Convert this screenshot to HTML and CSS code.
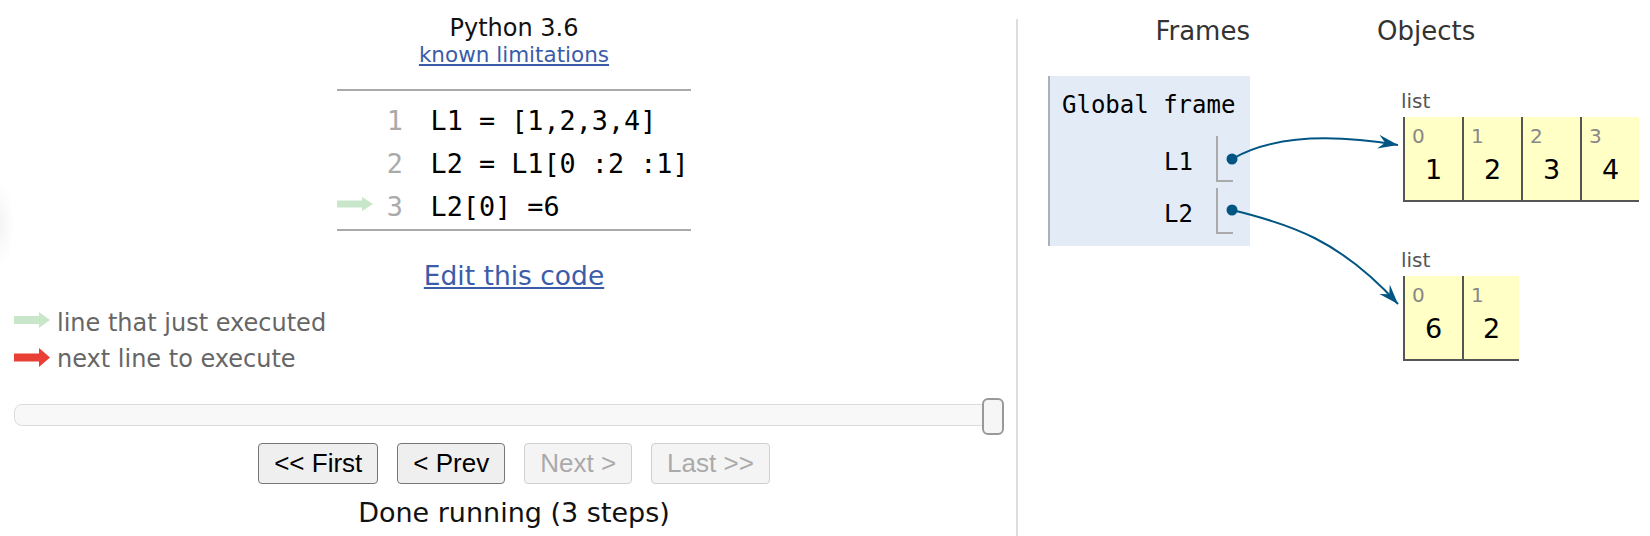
FILE: index.html
```html
<!DOCTYPE html>
<html lang="en">
<head>
<meta charset="utf-8">
<title>Python Tutor</title>
<link rel="stylesheet" href="styles.css">
</head>
<body>
<div class="edge-shadow"></div>
<div class="page">
  <section class="left">
    <div class="lang">Python 3.6</div>
    <a class="limits" href="#">known limitations</a>
    <div class="code">
      <div class="line"><span class="mark"></span><span class="num">1</span><span class="src">L1 = [1,2,3,4]</span></div>
      <div class="line"><span class="mark"></span><span class="num">2</span><span class="src">L2 = L1[0 :2 :1]</span></div>
      <div class="line"><span class="mark"><svg class="code-arrow" viewBox="0 0 36 14" width="36" height="14"><path d="M0,3.5 H25 V0 L36,7 L25,14 V10.5 H0 Z" fill="#c8e6c9"/></svg></span><span class="num">3</span><span class="src">L2[0] =6</span></div>
    </div>
    <a class="edit" href="#">Edit this code</a>
    <div class="legend">
      <div class="legend-row"><svg class="leg-arrow green" viewBox="0 0 36 16" width="36" height="16"><path d="M0,4 H25 V0 L36,8 L25,16 V12 H0 Z" fill="#c8e6c9"/></svg><span>line that just executed</span></div>
      <div class="legend-row"><svg class="leg-arrow red" viewBox="0 0 36 19" width="36" height="19"><path d="M0,5.5 H25 V0 L36,9.5 L25,19 V13.5 H0 Z" fill="#e93f34"/></svg><span>next line to execute</span></div>
    </div>
    <div class="slider"><div class="track"></div><div class="handle"></div></div>
    <div class="buttons">
      <button class="btn">&lt;&lt; First</button>
      <button class="btn">&lt; Prev</button>
      <button class="btn" disabled>Next &gt;</button>
      <button class="btn" disabled>Last &gt;&gt;</button>
    </div>
    <div class="status">Done running (3 steps)</div>
  </section>
  <div class="divider"></div>
  <section class="right">
    <div class="frames-col">
      <div class="col-head frames-head">Frames</div>
      <div class="frame">
        <div class="frame-title">Global frame</div>
        <div class="var-row"><span class="var-name">L1</span><span class="var-val"></span></div>
        <div class="var-row"><span class="var-name">L2</span><span class="var-val"></span></div>
      </div>
    </div>
    <div class="objects-col">
      <div class="col-head">Objects</div>
      <div class="heap">
        <div class="heap-obj">
          <div class="type">list</div>
          <div class="list">
            <div class="cell"><div class="idx">0</div><div class="val">1</div></div>
            <div class="cell"><div class="idx">1</div><div class="val">2</div></div>
            <div class="cell"><div class="idx">2</div><div class="val">3</div></div>
            <div class="cell"><div class="idx">3</div><div class="val">4</div></div>
          </div>
        </div>
        <div class="heap-obj second">
          <div class="type">list</div>
          <div class="list">
            <div class="cell"><div class="idx">0</div><div class="val">6</div></div>
            <div class="cell narrow"><div class="idx">1</div><div class="val">2</div></div>
          </div>
        </div>
      </div>
    </div>
    <svg class="pointers" width="632" height="536" viewBox="0 0 632 536">
      <defs>
        <marker id="head" markerUnits="userSpaceOnUse" viewBox="0 0 20 16" markerWidth="20" markerHeight="16" refX="20" refY="8" orient="auto">
          <path d="M0,1 L20,8 L0,15 L7,8 Z" fill="#005583"/>
        </marker>
      </defs>
      <path d="M214,159 C250,138 302,132 380,145" fill="none" stroke="#005583" stroke-width="2" marker-end="url(#head)"/>
      <path d="M214,210 C272,224 322,240 380,304" fill="none" stroke="#005583" stroke-width="2" marker-end="url(#head)"/>
      <circle cx="214" cy="159" r="5.5" fill="#005583"/>
      <circle cx="214" cy="210" r="5.5" fill="#005583"/>
    </svg>
  </section>
</div>
</body>
</html>
```
FILE: styles.css
```css
html, body {
  margin: 0;
  padding: 0;
  background: #fff;
}
body {
  font-family: "DejaVu Sans", Verdana, sans-serif;
  color: #000;
  overflow: hidden;
}
.edge-shadow {
  position: absolute;
  left: 0;
  top: 180px;
  width: 14px;
  height: 88px;
  background: radial-gradient(ellipse 14px 44px at 0 50%, rgba(0,0,0,0.045), rgba(0,0,0,0) 100%);
}
.page {
  display: flex;
  height: 536px;
}

/* ---------- left panel ---------- */
.left {
  width: 1000px;
  margin-left: 14px;
  margin-right: 2px;
  padding-top: 14px;
  display: flex;
  flex-direction: column;
  align-items: center;
}
.lang {
  font-size: 24px;
  line-height: 28px;
  color: #111;
}
.limits {
  display: block;
  font-size: 21.5px;
  line-height: 26px;
  color: #3b5ca9;
  text-decoration: underline;
}
.code {
  margin-top: 21px;
  width: 354px;
  border-top: 2px solid #aaa;
  border-bottom: 2px solid #aaa;
  padding-top: 11px;
  padding-bottom: 3px;
  display: flex;
  flex-direction: column;
  gap: 5px;
  font-family: "DejaVu Sans Mono", monospace;
  font-size: 26.8px;
}
.line {
  display: flex;
  height: 38px;
  line-height: 38px;
  white-space: pre;
}
.mark {
  width: 36px;
  flex: none;
}
.code-arrow {
  display: block;
  margin-top: 9px;
}
.num {
  width: 30px;
  flex: none;
  text-align: right;
  color: #aaa;
}
.src {
  margin-left: 27.5px;
}
.edit {
  display: block;
  margin-top: 29px;
  font-size: 26.5px;
  line-height: 32px;
  color: #3b5ca9;
  text-decoration: underline;
}
.legend {
  align-self: stretch;
  margin-top: 12.7px;
  font-size: 24px;
  color: #666;
}
.legend-row {
  display: flex;
  align-items: flex-start;
  height: 36px;
  line-height: 36px;
}
.leg-arrow {
  display: block;
  flex: none;
  margin-top: 7px;
  margin-right: 7px;
}
.slider {
  align-self: stretch;
  position: relative;
  margin-top: 27.3px;
  width: 990px;
  height: 22px;
}
.track {
  height: 22px;
  box-sizing: border-box;
  margin-right: 12px;
  border: 1px solid #dcdcdc;
  border-radius: 8px;
  background: #f8f8f8;
}
.handle {
  position: absolute;
  right: 0;
  top: -6px;
  width: 22px;
  height: 37px;
  box-sizing: border-box;
  border: 2px solid #999;
  border-radius: 6px;
  background: #f6f6f6;
}
.buttons {
  margin-top: 17px;
  display: flex;
  gap: 19px;
}
.btn {
  font-family: "Liberation Sans", Arial, sans-serif;
  font-size: 26px;
  line-height: 29px;
  padding: 5px 15px;
  margin: 0;
  border: 1px solid #767676;
  border-radius: 4px;
  background: #efefef;
  color: #000;
}
.btn:disabled {
  border-color: #cfcfcf;
  background: #f4f4f4;
  color: #aaa;
}
.status {
  margin-top: 13px;
  font-size: 27px;
  line-height: 31px;
  color: #111;
}

/* ---------- divider ---------- */
.divider {
  width: 2px;
  flex: none;
  margin-top: 19px;
  background: #ddd;
}

/* ---------- right panel ---------- */
.right {
  position: relative;
  flex: 1;
  display: flex;
  padding-top: 16px;
}
.col-head {
  font-size: 26px;
  line-height: 30px;
  color: #333;
  white-space: nowrap;
}
.frames-col {
  margin-left: 30px;
  width: 202px;
  flex: none;
}
.frames-head {
  text-align: right;
}
.frame {
  margin-top: 30px;
  box-sizing: border-box;
  width: 202px;
  border-left: 2px solid #a9b1b9;
  background: #e2ebf6;
  padding: 15px 17px 12px 12px;
  font-family: "DejaVu Sans Mono", monospace;
  font-size: 24px;
}
.frame-title {
  line-height: 28px;
  white-space: nowrap;
}
.var-row {
  display: flex;
  justify-content: flex-end;
  height: 46px;
  margin-top: 17px;
}
.var-row + .var-row {
  margin-top: 6px;
}
.var-name {
  line-height: 28px;
  margin-top: 12px;
  margin-right: 23px;
}
.var-val {
  width: 15px;
  height: 44px;
  border-left: 2px solid #aaa;
  border-bottom: 2px solid #aaa;
}
.objects-col {
  margin-left: 127px;
  flex: none;
}
.heap {
  margin-top: 43px;
  padding-left: 26px;
}
.heap-obj.second {
  margin-top: 46px;
}
.type {
  font-size: 20px;
  line-height: 24px;
  color: #555;
  margin-left: -2px;
}
.list {
  margin-top: 4px;
  display: flex;
}
.cell {
  box-sizing: border-box;
  width: 59px;
  height: 85px;
  border-left: 2px solid #555;
  border-bottom: 2px solid #555;
  background: #ffffc6;
  padding-top: 8px;
}
.cell.narrow {
  width: 57px;
}
.idx {
  font-size: 20px;
  line-height: 22px;
  color: #888;
  padding-left: 7px;
}
.val {
  margin-top: 7px;
  font-size: 27px;
  line-height: 32px;
  text-align: center;
}
.pointers {
  position: absolute;
  left: 0;
  top: 0;
  overflow: visible;
  pointer-events: none;
}
```
